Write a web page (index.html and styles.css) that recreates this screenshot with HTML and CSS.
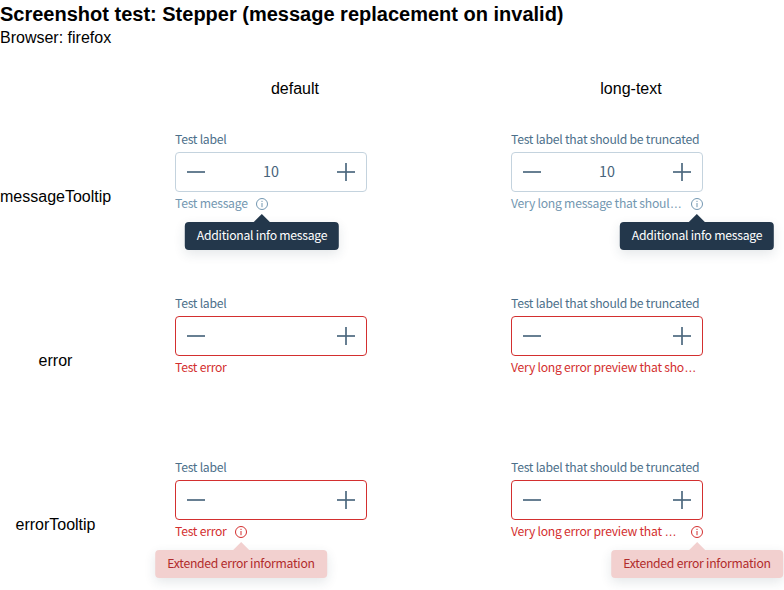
FILE: index.html
```html
<!DOCTYPE html>
<html lang="en">
<head>
<meta charset="utf-8">
<title>Stepper</title>
<link rel="stylesheet" href="styles.css">
</head>
<body>
<svg class="defs" aria-hidden="true">
  <symbol id="minus" viewBox="0 0 18 18"><path d="M0 9H18" stroke="currentColor" stroke-width="2"/></symbol>
  <symbol id="plus" viewBox="0 0 18 18"><path d="M0 9H18M9 0V18" stroke="currentColor" stroke-width="2"/><path d="M8 9H10" stroke="#2c4a63" stroke-width="2"/></symbol>
  <symbol id="info" viewBox="0 0 12 12"><circle cx="6" cy="6" r="5.5" fill="none" stroke="currentColor"/><path d="M6 5V9.2M6 2.8V4" stroke="currentColor"/></symbol>
</svg>
<h1>Screenshot test: Stepper (message replacement on invalid)</h1>
<p class="browser">Browser: firefox</p>
<main class="grid">
  <div class="corner"></div>
  <div class="column-name">default</div>
  <div class="column-name">long-text</div>

  <div class="row-name">messageTooltip</div>
  <div class="cell">
    <div class="label">Test label</div>
    <div class="stepper"><svg><use href="#minus"/></svg><span>10</span><svg><use href="#plus"/></svg></div>
    <div class="message"><span class="text">Test message</span><span class="hint"><svg><use href="#info"/></svg><span class="tooltip">Additional info message</span></span></div>
  </div>
  <div class="cell long">
    <div class="label">Test label that should be truncated</div>
    <div class="stepper"><svg><use href="#minus"/></svg><span>10</span><svg><use href="#plus"/></svg></div>
    <div class="message"><span class="text">Very long message that shoul<span class="dots">…</span></span><span class="hint"><svg><use href="#info"/></svg><span class="tooltip">Additional info message</span></span></div>
  </div>

  <div class="row-name">error</div>
  <div class="cell error">
    <div class="label">Test label</div>
    <div class="stepper"><svg><use href="#minus"/></svg><svg><use href="#plus"/></svg></div>
    <div class="message"><span class="text">Test error</span></div>
  </div>
  <div class="cell error long">
    <div class="label">Test label that should be truncated</div>
    <div class="stepper"><svg><use href="#minus"/></svg><svg><use href="#plus"/></svg></div>
    <div class="message"><span class="text">Very long error preview that sho<span class="dots">…</span></span></div>
  </div>

  <div class="row-name">errorTooltip</div>
  <div class="cell error">
    <div class="label">Test label</div>
    <div class="stepper"><svg><use href="#minus"/></svg><svg><use href="#plus"/></svg></div>
    <div class="message"><span class="text">Test error</span><span class="hint"><svg><use href="#info"/></svg><span class="tooltip">Extended error information</span></span></div>
  </div>
  <div class="cell error long">
    <div class="label">Test label that should be truncated</div>
    <div class="stepper"><svg><use href="#minus"/></svg><svg><use href="#plus"/></svg></div>
    <div class="message"><span class="text">Very long error preview that <span class="dots">…</span></span><span class="hint"><svg><use href="#info"/></svg><span class="tooltip">Extended error information</span></span></div>
  </div>
</main>
</body>
</html>
```
FILE: styles.css
```css
body {
  margin: 0;
  height: 590px;
  overflow: hidden;
  background: #fff;
  color: #000;
  font: 16px/18px "Liberation Sans", Arial, sans-serif;
}

.defs {
  position: absolute;
  width: 0;
  height: 0;
}

h1 {
  margin: 0;
  font-size: 20px;
  line-height: 28px;
}

.browser {
  margin: 0;
  line-height: 20px;
}

.grid {
  display: grid;
  grid-template-columns: 127px 336px 336px;
  grid-template-rows: 50px repeat(3, 164px);
  padding-top: 16px;
  width: 799px;
}

.column-name {
  align-self: center;
  text-align: center;
}

.row-name {
  align-self: center;
  width: 111px;
  padding-top: 2px;
  text-align: center;
}

.cell {
  padding: 16px 96px 0 48px;
  color: #7397b1;
  font: 12.2px/18px "Noto Sans CJK SC", sans-serif;
  letter-spacing: -.25px;
}

.label {
  height: 18px;
  margin-bottom: 4px;
  color: #4c6f8a;
  white-space: nowrap;
}

.stepper {
  display: flex;
  align-items: center;
  justify-content: space-between;
  box-sizing: border-box;
  height: 40px;
  padding: 0 11px;
  border: 1px solid #c4d3de;
  border-radius: 4px;
  color: #46637b;
  font-size: 14.3px;
  letter-spacing: 0;
}

.stepper span {
  padding-bottom: 2px;
}

.stepper svg {
  width: 18px;
  height: 18px;
  opacity: .82;
}

.message {
  display: flex;
  height: 18px;
  margin-top: 2px;
}

.text {
  white-space: nowrap;
}

.dots {
  margin-left: .3px;
  font-family: "Liberation Sans", sans-serif;
  letter-spacing: 0;
}

.hint {
  position: relative;
  flex: none;
  width: 12px;
  margin-left: 8.4px;
  padding-top: 4px;
  line-height: 0;
}

.long .hint {
  margin-left: auto;
}

.hint svg {
  width: 12px;
  height: 12px;
}

.tooltip {
  position: absolute;
  top: 28px;
  left: 50%;
  transform: translateX(-50%);
  height: 28px;
  padding: 0 12px;
  border-radius: 4px;
  background: #23374b;
  box-shadow: 0 4px 12px rgba(35, 55, 75, .12);
  color: #fff;
  line-height: 26px;
  white-space: nowrap;
}

.tooltip::before {
  content: "";
  position: absolute;
  top: -8px;
  left: calc(50% - 8px);
  border: solid transparent;
  border-width: 0 8px 8px;
  border-bottom-color: #23374b;
}

.error {
  color: #d32f2f;
}

.error .stepper {
  border-color: #d32f2f;
}

.error .tooltip {
  background: #f2d0cf;
  color: #b12b2b;
}

.error .tooltip::before {
  border-bottom-color: #f2d0cf;
}
```
